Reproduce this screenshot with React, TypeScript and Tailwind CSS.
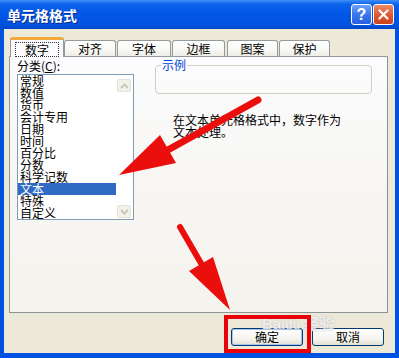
const tabs = [
  { label: '数字', w: 'w-[54px]', ml: 'ml-0' },
  { label: '对齐', w: 'w-[52px]', ml: 'ml-0' },
  { label: '字体', w: 'w-[54px]', ml: 'ml-[1px]' },
  { label: '边框', w: 'w-[53px]', ml: 'ml-[1px]' },
  { label: '图案', w: 'w-[51px]', ml: 'ml-[2px]' },
  { label: '保护', w: 'w-[51px]', ml: 'ml-[1px]' },
]

const categories = ['常规', '数值', '货币', '会计专用', '日期', '时间', '百分比', '分数', '科学记数', '文本', '特殊', '自定义']

function Chevron({ up }: { up?: boolean }) {
  return (
    <svg width="9" height="6" viewBox="0 0 9 6">
      <path d={up ? 'M1 5 L4.5 1.5 L8 5' : 'M1 1 L4.5 4.5 L8 1'} fill="none" stroke="#c9c7ba" strokeWidth="2" />
    </svg>
  )
}

function XpButton({ label, isDefault }: { label: string; isDefault?: boolean }) {
  return (
    <button
      className={`w-[72px] h-[18px] rounded-[3px] border border-[#003c74] bg-[linear-gradient(to_bottom,#ffffff_0%,#f5f4ef_60%,#e3e1d6_100%)] text-[12px] leading-[16px] text-black ${isDefault ? 'shadow-[inset_0_0_0_1px_#a9c4ee]' : ''}`}
    >
      {label}
    </button>
  )
}

export default function App() {
  return (
    <div className="w-[399px] h-[358px] relative overflow-hidden font-['Noto_Sans_CJK_SC','Noto_Sans',sans-serif] text-[12px] leading-[12px] text-black">
      <div className="w-full h-full flex flex-col bg-[#0052e0]">
        {/* title bar */}
        <div className="h-[29px] shrink-0 flex items-center justify-between bg-[linear-gradient(to_bottom,#3d8ef7_0%,#0b62ea_15%,#0256e6_50%,#0053df_85%,#0046c8_100%)]">
          <span className="ml-[7px] text-white font-bold text-[14px] leading-[16px] [text-shadow:1px_1px_#0b2a8a]">单元格格式</span>
          <div className="flex items-center gap-[1px] mr-[5px]">
            <div className="w-[21px] h-[21px] rounded-[3px] border border-white bg-[linear-gradient(to_bottom,#6ea1f8_0%,#3a76ee_50%,#255fe0_100%)] flex items-center justify-center text-white font-bold text-[16px] leading-[16px] font-['Liberation_Sans',sans-serif]">?</div>
            <div className="w-[21px] h-[21px] rounded-[3px] border border-white bg-[linear-gradient(to_bottom,#ec8a66_0%,#e0542c_55%,#c9431e_100%)] flex items-center justify-center">
              <svg width="11" height="11" viewBox="0 0 11 11">
                <path d="M1.5 1.5 L9.5 9.5 M9.5 1.5 L1.5 9.5" stroke="#fff" strokeWidth="2.2" strokeLinecap="round" />
              </svg>
            </div>
          </div>
        </div>

        {/* body */}
        <div className="flex-1 flex flex-col mx-[4px] mb-[5px] bg-[#ece9d8]">
          {/* tabs */}
          <div className="flex items-end h-[20px] mt-[8px] pl-[6px]">
            {tabs.map((t, i) =>
              i === 0 ? (
                <div key={t.label} className={`relative z-10 ${t.w} ${t.ml} h-[20px] rounded-t-[3px] border-x border-[#919b9c] border-t-[3px] border-t-[#f3a93a] bg-[#fcfcfe] flex items-start justify-center pt-[2px]`}>
                  <span className="px-[9px] py-[1px] border border-dotted border-[#333] leading-[11px]">{t.label}</span>
                </div>
              ) : (
                <div key={t.label} className={`${t.w} ${t.ml} h-[17px] rounded-t-[3px] border border-b-0 border-[#919b9c] bg-[linear-gradient(to_bottom,#ffffff_0%,#f7f7f3_60%,#eceae2_100%)] flex items-center justify-center pb-[1px]`}>
                  {t.label}
                </div>
              )
            )}
          </div>

          {/* panel */}
          <div className="-mt-[1px] ml-[5px] mr-[7px] h-[257px] border border-[#919b9c] border-r-[#8a9293] border-b-[#8a9293] bg-[linear-gradient(to_bottom,#fcfcfe_0%,#f7f6f2_50%,#f4f3ee_100%)] flex">
            {/* left: category list */}
            <div className="pl-[7px] pt-[3px]">
              <div className="h-[12px]">分类(<span className="underline">C</span>):</div>
              <div className="mt-[2px] w-[117px] h-[146px] border border-[#7f9db9] bg-white flex">
                <div className="w-[98px]">
                  {categories.map(c => (
                    <div key={c} className={`h-[12px] leading-[12px] pl-[2px] ${c === '文本' ? 'bg-[#316ac5] text-white' : ''}`}>{c}</div>
                  ))}
                </div>
                <div className="w-[17px] flex flex-col justify-between pt-[4px] pb-[1px] pl-[1px]">
                  <div className="w-[14px] h-[13px] rounded-[2px] border border-[#e4e2d9] bg-[#f2f1ea] flex items-center justify-center"><Chevron up /></div>
                  <div className="w-[14px] h-[13px] rounded-[2px] border border-[#e4e2d9] bg-[#f2f1ea] flex items-center justify-center"><Chevron /></div>
                </div>
              </div>
            </div>

            {/* right: sample + description */}
            <div className="ml-[21px] pt-[2px] w-[217px]">
              <fieldset className="h-[35px] border border-[#d0d0bf] rounded-[4px] px-[5px]">
                <legend className="px-[1px] text-[#0046d5] leading-[12px]">示例</legend>
              </fieldset>
              <div className="mt-[20px] ml-[18px] leading-[12px]">
                <div>在文本单元格格式中，数字作为</div>
                <div>文本处理。</div>
              </div>
            </div>
          </div>

          {/* buttons */}
          <div className="mt-[15px] flex justify-end gap-[9px] pr-[11px]">
            <XpButton label="确定" isDefault />
            <XpButton label="取消" />
          </div>
        </div>
      </div>

      {/* watermark */}
      <div className="absolute left-[262px] top-[316px] text-white/70 text-[15px] font-bold leading-[15px] [text-shadow:0_0_2px_#bbb] pointer-events-none font-['Liberation_Sans','Noto_Sans_CJK_SC',sans-serif]">Bai<span className="text-[12px]">du</span> 经验</div>

      {/* red highlight box */}
      <div className="absolute left-[224px] top-[315px] w-[87px] h-[38px] border-[4px] border-[#e8000b] pointer-events-none" />

      {/* arrows */}
      <svg className="absolute inset-0 pointer-events-none" width="399" height="358" viewBox="0 0 399 358">
        <line x1="258" y1="100" x2="166" y2="151" stroke="#ea0f0c" strokeWidth="7" strokeLinecap="round" />
        <polygon points="119,175 160,135 176,163" fill="#ea0f0c" />
        <line x1="180" y1="227" x2="202" y2="265" stroke="#ea0f0c" strokeWidth="6" strokeLinecap="round" />
        <polygon points="230,310 189,271 213,257" fill="#ea0f0c" />
      </svg>
    </div>
  )
}
